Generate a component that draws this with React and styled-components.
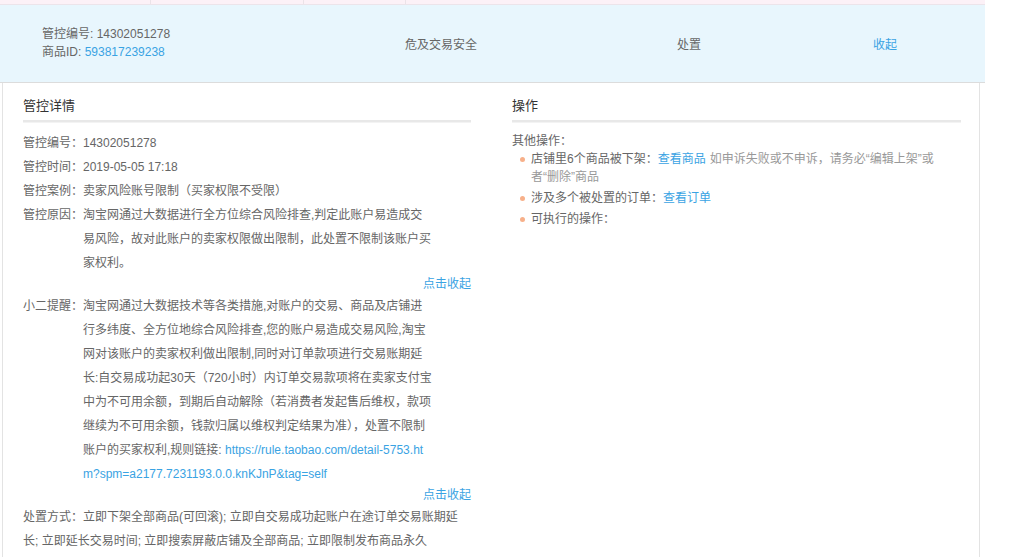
import React from "react";
import styled, { createGlobalStyle } from "styled-components";

const Global = createGlobalStyle`
  body {
    margin: 0;
    background: #fff;
    font-family: "Liberation Sans", "Noto Sans CJK SC", sans-serif;
    font-size: 12px;
    color: #666;
  }
`;

const Wrap = styled.div`
  width: 985px;
`;

const HeadStrip = styled.div`
  display: grid;
  grid-template-columns: 150px 153px 102px 1fr;
  height: 4px;
  background: #fcf1f7;
  border-bottom: 1px solid #ece4ea;
  div + div {
    border-left: 1px solid #ebe3e8;
  }
`;

const Row = styled.div`
  display: grid;
  grid-template-columns: 300px 282px 214px 178px;
  align-items: center;
  height: 76px;
  padding-bottom: 1px;
  background: #e8f6fd;
  border-bottom: 1px solid #dcdcdc;
`;

const IdCell = styled.div`
  padding-left: 42px;
  line-height: 18px;
  color: #666;
`;

const Cell = styled.div`
  text-align: center;
  color: ${(p) => (p.$link ? "#3aa3e3" : "#666")};
`;

const Link = styled.a`
  color: #3aa3e3;
  text-decoration: none;
`;

const Panel = styled.div`
  display: grid;
  grid-template-columns: 448px 449px;
  column-gap: 41px;
  margin-left: 2px;
  width: 978px;
  padding: 0 0 0 20px;
  box-sizing: border-box;
  border-left: 1px solid #e3e3e3;
  border-right: 1px solid #e3e3e3;
  height: 475px;
  overflow: hidden;
`;

const Title = styled.h3`
  margin: 14px 0 0;
  padding-bottom: 5px;
  font-size: 13px;
  font-weight: normal;
  color: #333;
  line-height: 18px;
  border-bottom: 2px solid #e8e8e8;
  box-shadow: 0 1px 0 #f3f3f3;
`;

const List = styled.div`
  padding-top: 9px;
`;

const Item = styled.div`
  display: flex;
  line-height: 24px;
`;

const Label = styled.span`
  flex: none;
  width: 60px;
`;

const Value = styled.div`
  width: 360px;
  white-space: nowrap;
`;

const Toggle = styled.div`
  text-align: right;
  line-height: 18px;
  margin-bottom: 1px;
  color: #3aa3e3;
`;

const Plain = styled.div`
  line-height: 24px;
  white-space: nowrap;
`;

const Ops = styled.div`
  padding-top: 10px;
  line-height: 18px;
`;

const Bullets = styled.ul`
  margin: 0;
  padding: 0 0 0 19px;
  list-style: none;
  li {
    position: relative;
    padding-bottom: 3px;
  }
  li::before {
    content: "";
    position: absolute;
    left: -11px;
    top: 7px;
    width: 5px;
    height: 5px;
    border-radius: 50%;
    background: #f7b08a;
  }
`;

const Note = styled.span`
  color: #999;
  margin-left: 4px;
`;

const Lines = ({ lines }) =>
  lines.map((l, i) => <div key={i}>{l}</div>);

const reason = [
  "淘宝网通过大数据进行全方位综合风险排查,判定此账户易造成交",
  "易风险，故对此账户的卖家权限做出限制，此处置不限制该账户买",
  "家权利。",
];

const tip = [
  "淘宝网通过大数据技术等各类措施,对账户的交易、商品及店铺进",
  "行多纬度、全方位地综合风险排查,您的账户易造成交易风险,淘宝",
  "网对该账户的卖家权利做出限制,同时对订单款项进行交易账期延",
  "长:自交易成功起30天（720小时）内订单交易款项将在卖家支付宝",
  "中为不可用余额，到期后自动解除（若消费者发起售后维权，款项",
  "继续为不可用余额，钱款归属以维权判定结果为准），处置不限制",
  <>
    账户的买家权利,规则链接: <Link>https://rule.taobao.com/detail-5753.ht</Link>
  </>,
  <Link>m?spm=a2177.7231193.0.0.knKJnP&amp;tag=self</Link>,
];

const handling = [
  "处置方式：立即下架全部商品(可回滚); 立即自交易成功起账户在途订单交易账期延",
  "长; 立即延长交易时间; 立即搜索屏蔽店铺及全部商品; 立即限制发布商品永久",
  "限制; 立即限制参加营销活动永久限制",
];

export default function App() {
  return (
    <Wrap>
      <Global />
      <HeadStrip>
        <div />
        <div />
        <div />
        <div />
      </HeadStrip>
      <Row>
        <IdCell>
          <div>管控编号: 14302051278</div>
          <div>
            商品ID: <Link>593817239238</Link>
          </div>
        </IdCell>
        <Cell>危及交易安全</Cell>
        <Cell>处置</Cell>
        <Cell $link>收起</Cell>
      </Row>
      <Panel>
        <div>
          <Title>管控详情</Title>
          <List>
            <Item>
              <Label>管控编号：</Label>
              <Value>14302051278</Value>
            </Item>
            <Item>
              <Label>管控时间：</Label>
              <Value>2019-05-05 17:18</Value>
            </Item>
            <Item>
              <Label>管控案例：</Label>
              <Value>卖家风险账号限制（买家权限不受限）</Value>
            </Item>
            <Item>
              <Label>管控原因：</Label>
              <Value>
                <Lines lines={reason} />
              </Value>
            </Item>
            <Toggle>点击收起</Toggle>
            <Item>
              <Label>小二提醒：</Label>
              <Value>
                <Lines lines={tip} />
              </Value>
            </Item>
            <Toggle>点击收起</Toggle>
            <Plain>
              <Lines lines={handling} />
            </Plain>
          </List>
        </div>
        <div>
          <Title>操作</Title>
          <Ops>
            <div>其他操作：</div>
            <Bullets>
              <li>
                店铺里6个商品被下架：<Link>查看商品</Link>
                <Note>如申诉失败或不申诉，请务必“编辑上架”或</Note>
                <br />
                <Note as="span" style={{ marginLeft: 0 }}>者“删除”商品</Note>
              </li>
              <li>
                涉及多个被处置的订单：<Link>查看订单</Link>
              </li>
              <li>可执行的操作：</li>
            </Bullets>
          </Ops>
        </div>
      </Panel>
    </Wrap>
  );
}
